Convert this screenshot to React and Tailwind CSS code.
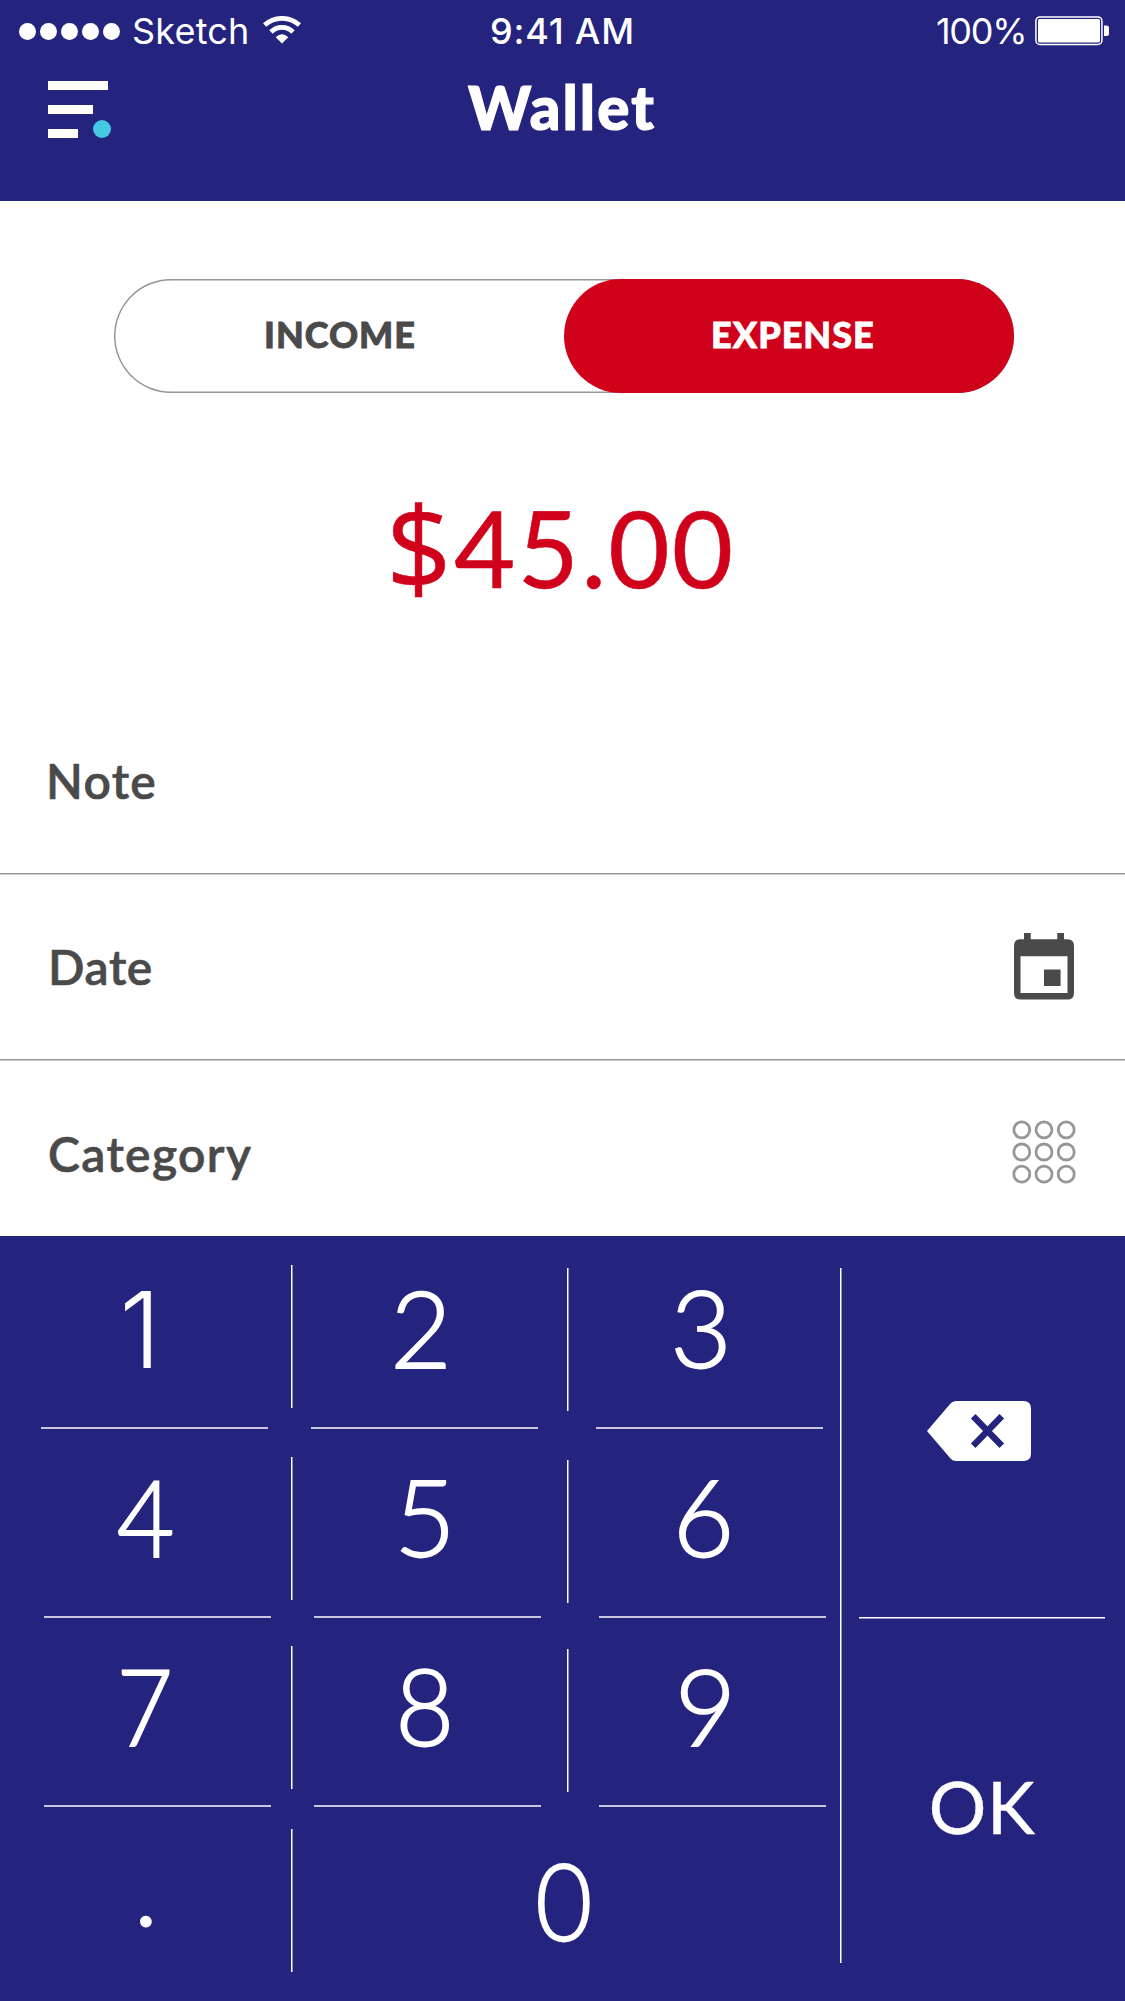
function StatusBar() {
  return (
    <div className="flex h-[62px] items-center font-['Inter',sans-serif] text-[36px] leading-[62px]">
      <div className="flex w-[490px] items-center pl-[19px]">
        <div className="flex gap-1">
          {[0, 1, 2, 3, 4].map((i) => (
            <span key={i} className="size-[17px] rounded-full bg-white" />
          ))}
        </div>
        <span className="ml-3 w-[131px] tracking-[0.2px]">Sketch</span>
        <svg className="mt-[-3px] h-7 w-[38px]" viewBox="0 0 38 28" fill="none" stroke="#fff">
          <path d="M1.6 9A26.2 26.2 0 0 1 36.4 9" strokeWidth="4.8" />
          <path d="M8 16A15.5 15.5 0 0 1 30 16" strokeWidth="4.8" />
          <path d="M12.7 21.2Q19 15.4 25.3 21.2L19 27.4Z" fill="#fff" stroke="none" />
        </svg>
      </div>
      <span className="w-[446px] font-medium tracking-[0.8px]">9:41 AM</span>
      <span className="w-[99px] tracking-[-1.3px]">100%</span>
      <svg className="h-[30px] w-[75px]" viewBox="0 0 75 30">
        <rect x="0.9" y="0.9" width="66" height="27.6" rx="4" fill="none" stroke="#fff" strokeWidth="1.5" />
        <rect x="3" y="3" width="62" height="23.5" rx="1.5" fill="#fff" />
        <path d="M69 9.5h2.5q2.5 0 2.5 2.5v5.5q0 2.5-2.5 2.5H69Z" fill="#fff" />
      </svg>
    </div>
  );
}

function Header() {
  return (
    <header className="h-[201px] bg-[#24237e] text-white">
      <StatusBar />
      <div className="flex h-[88px] pl-12">
        <svg className="mt-[19px] h-[57px] w-[63px]" viewBox="0 0 63 57" fill="#fff">
          <rect width="60" height="9" />
          <rect y="24" width="45" height="9" />
          <rect y="48" width="30" height="9" />
          <circle cx="54" cy="48" r="9" fill="#44c8e4" />
        </svg>
        <h1 className="mt-px ml-[357px] text-[60px] leading-[88px] font-black tracking-[2.1px] [-webkit-text-stroke:1.2px_white]">Wallet</h1>
      </div>
    </header>
  );
}

function Toggle() {
  return (
    <div className="mt-[78px] ml-[114px] flex h-[114px] w-[900px] rounded-full text-[36px] leading-[1.2] font-black shadow-[inset_0_0_0_1.5px_#979797]">
      <button className="w-[450px] pb-[3px] pl-[150px] text-left tracking-[1px] text-[#4a4a4a] [-webkit-text-stroke:0.8px_#4a4a4a]">INCOME</button>
      <button className="w-[450px] rounded-full bg-[#d0021b] pb-[3px] pl-[147px] text-left tracking-[1px] text-white [-webkit-text-stroke:0.8px_white]">EXPENSE</button>
    </div>
  );
}

function Rule() {
  return <div className="h-[2px] border-t border-[#979797] bg-[#cbcbcb]" />;
}

function CalendarIcon() {
  return (
    <svg className="mr-[51px] mb-[2px] h-[67px] w-[60px]" viewBox="0 0 60 67">
      <path
        fill="#4a4a4a"
        fillRule="evenodd"
        d="M10 0h6.7v6.3h26.6V0H50v6.3h3.5Q60 6.3 60 13v47q0 6.6-6.5 6.6h-47Q0 66.6 0 60V13Q0 6.3 6.5 6.3H10ZM6.5 23.3V60h47V23.3ZM30 36.5h16.6V53H30Z"
      />
    </svg>
  );
}

function GridIcon() {
  return (
    <svg className="mr-[49px] h-16 w-16" viewBox="0 0 64 64" fill="none" stroke="#979797" strokeWidth="2.8">
      {[9.8, 32, 54.2].map((y) => [9.8, 32, 54.2].map((x) => <circle key={`${x}-${y}`} cx={x} cy={y} r="8" />))}
    </svg>
  );
}

function VLine({ className }) {
  return <div className={`h-[143px] w-[2px] shrink-0 border-l border-white bg-[#9291be] ${className}`} />;
}

function HLines({ className }) {
  return (
    <div className={`flex h-[2px] ${className}`}>
      <div className="w-[227px] bg-[#c8c6de]" />
      <div className="ml-[43px] w-[227px] bg-[#c8c6de]" />
      <div className="ml-[58px] w-[227px] bg-[#c8c6de]" />
    </div>
  );
}

function Key({ className, children }) {
  return <button className={`flex items-center justify-center ${className}`}>{children}</button>;
}

function Keypad() {
  return (
    <section className="flex h-[765px] bg-[#24237e] text-white">
      <div className="w-[840px] text-[106px] leading-none font-light [-webkit-text-stroke:1.8px_white]">
        <div className="flex h-[191px]">
          <Key className="w-[291px] pr-[11px] pb-1 font-['Inter',sans-serif] [-webkit-text-stroke:0px]">1</Key>
          <VLine className="mt-[29px]" />
          <Key className="w-[274px] pr-[18px] pb-[10px]">2</Key>
          <VLine className="mt-8" />
          <Key className="w-[271px] pr-[7px] pb-[10px]">3</Key>
        </div>
        <HLines className="pl-[41px]" />
        <div className="flex h-[187px]">
          <Key className="w-[291px] pb-[13px]">
            <span className="inline-block scale-x-[0.94]">4</span>
          </Key>
          <VLine className="mt-7" />
          <Key className="w-[274px] pr-[10px] pb-[13px]">5</Key>
          <VLine className="mt-[31px]" />
          <Key className="w-[271px] pr-[2px] pb-[13px]">6</Key>
        </div>
        <HLines className="pl-11" />
        <div className="flex h-[187px]">
          <Key className="w-[291px] pr-[2px] pb-[13px]">
            <span className="inline-block scale-x-[0.92]">7</span>
          </Key>
          <VLine className="mt-7" />
          <Key className="w-[274px] pr-[10px] pb-[14px]">
            <span className="inline-block scale-x-[0.96]">8</span>
          </Key>
          <VLine className="mt-[31px]" />
          <Key className="w-[271px] pl-[2px] pb-[13px]">9</Key>
        </div>
        <HLines className="pl-11" />
        <div className="flex h-[194px]">
          <Key className="w-[291px] pl-px pb-[39px]">.</Key>
          <VLine className="mt-[22px]" />
          <Key className="w-[547px] pr-[6px] pb-[8px]">
            <span className="inline-block scale-x-[0.93]">0</span>
          </Key>
        </div>
      </div>
      <div className="mt-8 h-[695px] w-[2px] border-l border-white bg-[#9291be]" />
      <div className="w-[283px]">
        <Key className="h-[381px] w-full pt-[9px] pr-[10px]">
          <svg className="h-[60px] w-[104px]" viewBox="0 0 104 60">
            <path fill="#fff" d="M0 30L23.5 2.6Q25.7 0 29 0H96.500Q104 0 104 7.500V52.500Q104 60 96.500 60H29Q25.700 60 23.500 57.400Z" />
            <path d="M46.200 15.200L74.800 44.800M74.800 15.200L46.200 44.800" stroke="#24237e" strokeWidth="6.400" />
          </svg>
        </Key>
        <div className="ml-[17px] h-[2px] w-[246px] border-t border-white bg-[#9291be]" />
        <Key className="h-[382px] w-full pr-[3px] pb-[8px] text-[72px] leading-none">
          <span className="tracking-[0.7px] [-webkit-text-stroke:0.5px_white]">OK</span>
        </Key>
      </div>
    </section>
  );
}

export default function App() {
  return (
    <div className="flex h-[2001px] w-[1125px] flex-col overflow-hidden bg-white font-['Lato',sans-serif]">
      <Header />
      <Toggle />
      <div className="mt-[84px] flex h-[140px] pl-[386px] text-[106px] leading-[140px] text-[#d0021b] [-webkit-text-stroke:0.5px_#d0021b]">
        <span className="w-[68px] font-['Open_Sans',sans-serif] text-[115px] leading-[137px]">$</span>
        <span className="tracking-[2.1px]">45.00</span>
      </div>
      <div className="mt-[70px] text-[48px] font-semibold text-[#4a4a4a] [-webkit-text-stroke:0.6px_#4a4a4a]">
        <div className="flex h-[186px] items-center pt-[2px] pl-[46px] tracking-[1.3px]">Note</div>
        <Rule />
        <div className="flex h-[184px] items-center justify-between pl-12">
          <span className="tracking-[0.6px]">Date</span>
          <CalendarIcon />
        </div>
        <Rule />
        <div className="flex h-[175px] items-center justify-between pt-[7px] pl-12">
          <span className="pt-[3px] tracking-[1.35px]">Category</span>
          <GridIcon />
        </div>
      </div>
      <Keypad />
    </div>
  );
}
